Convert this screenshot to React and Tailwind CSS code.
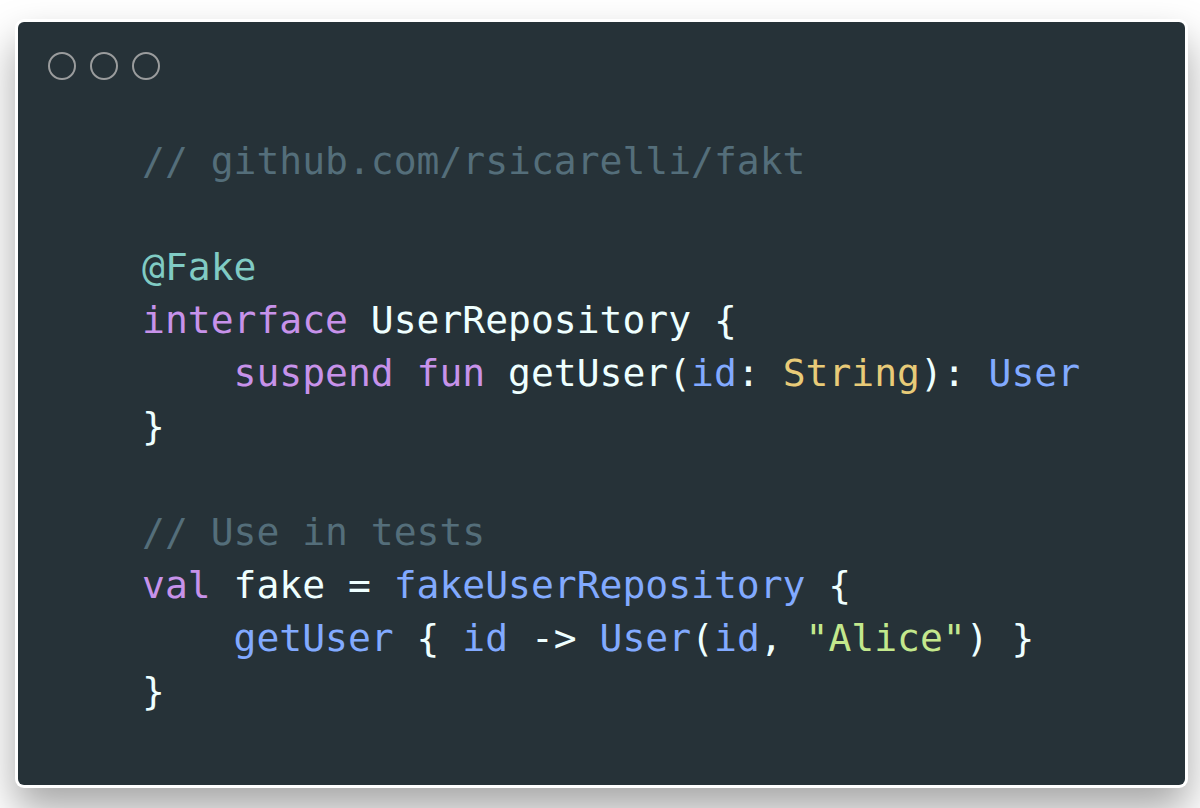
import React from 'react';

const C = {
  comment: 'text-[#546e7a]',
  kw: 'text-[#c792ea]',
  ann: 'text-[#80cbc4]',
  plain: 'text-[#eeffff]',
  fn: 'text-[#82aaff]',
  type: 'text-[#e8cb78]',
  str: 'text-[#c3e88d]',
};

const lines = [
  [['// github.com/rsicarelli/fakt', C.comment]],
  [],
  [['@Fake', C.ann]],
  [['interface', C.kw], [' UserRepository {', C.plain]],
  [
    ['    ', C.plain],
    ['suspend', C.kw],
    [' ', C.plain],
    ['fun', C.kw],
    [' getUser(', C.plain],
    ['id', C.fn],
    [': ', C.plain],
    ['String', C.type],
    ['): ', C.plain],
    ['User', C.fn],
  ],
  [['}', C.plain]],
  [],
  [['// Use in tests', C.comment]],
  [
    ['val', C.kw],
    [' fake = ', C.plain],
    ['fakeUserRepository', C.fn],
    [' {', C.plain],
  ],
  [
    ['    ', C.plain],
    ['getUser', C.fn],
    [' { ', C.plain],
    ['id', C.fn],
    [' -> ', C.plain],
    ['User', C.fn],
    ['(', C.plain],
    ['id', C.fn],
    [', ', C.plain],
    ['"Alice"', C.str],
    [') }', C.plain],
  ],
  [['}', C.plain]],
];

const Dot = () => (
  <div className="w-[28px] h-[28px] rounded-full border-2 border-[#9a9c9d]" />
);

export default function App() {
  return (
    <div className="w-[1200px] h-[808px] bg-white overflow-hidden pl-[15px] pt-[19px]">
      <div className="w-[1173px] p-[3px] bg-white rounded-[9px] shadow-[0_22px_40px_rgba(0,0,0,0.35)]">
        <div className="h-[763px] bg-[#263238] rounded-[6px] pt-[30px] pl-[30px]">
          <div className="flex gap-[14px]">
            <Dot />
            <Dot />
            <Dot />
          </div>
          <pre
            className="mt-[55px] ml-[94px] text-[38px] leading-[53px]"
            style={{ fontFamily: '"DejaVu Sans Mono", "Liberation Mono", monospace' }}
          >
            {lines.map((line, i) => (
              <div key={i} className="h-[53px] whitespace-pre">
                {line.map(([t, cls], j) => (
                  <span key={j} className={cls}>
                    {t}
                  </span>
                ))}
              </div>
            ))}
          </pre>
        </div>
      </div>
    </div>
  );
}
